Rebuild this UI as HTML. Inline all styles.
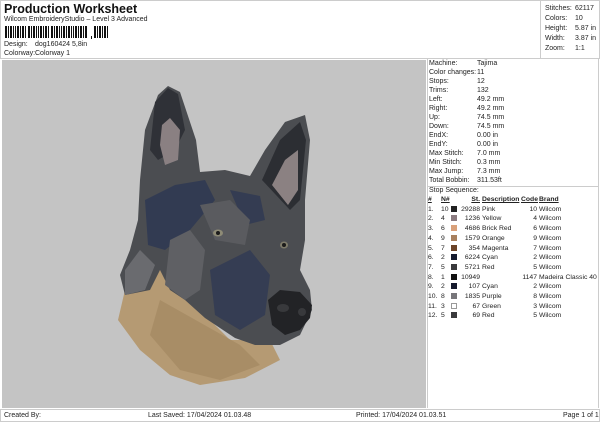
<!DOCTYPE html>
<html><head><meta charset="utf-8"><style>
*{margin:0;padding:0;box-sizing:border-box}
body{width:600px;height:424px;background:#fff;font-family:"Liberation Sans",Arial,sans-serif;color:#222;position:relative;overflow:hidden;font-size:7px}
.a{position:absolute;white-space:nowrap}
.t{font-size:12.5px;font-weight:bold;color:#111}
.s{font-size:7px}
.r{font-size:7px}
.tb{table-layout:fixed;border-collapse:collapse}
.tb td{font-size:6.8px;line-height:9.7px;height:9.7px;padding:0;white-space:nowrap;overflow:visible}
.tb td.st,.tb td.cd{text-align:right}
.tb td.ds,.tb td.br{padding-left:2px}
.tb i{display:inline-block;width:6px;height:6px;vertical-align:-1px}
</style></head><body>
<div class="a" style="left:0;top:0;width:600px;height:59px;border:1px solid #ccc;"></div>
<div class="a" style="left:540px;top:0;width:1px;height:59px;background:#ccc"></div>
<div class="a t" style="left:4px;top:2px">Production Worksheet</div>
<div class="a s" style="left:4px;top:16px">Wilcom EmbroideryStudio – Level 3 Advanced</div>
<svg class="a" style="left:5px;top:26px" width="104" height="13">
<g fill="#111">
<rect x="0" y="0" width="2" height="12"/><rect x="3" y="0" width="1" height="12"/><rect x="5" y="0" width="2" height="12"/><rect x="8" y="0" width="1" height="12"/><rect x="10" y="0" width="1" height="12"/><rect x="12" y="0" width="2" height="12"/><rect x="15" y="0" width="1" height="12"/><rect x="17" y="0" width="2" height="12"/><rect x="20" y="0" width="1" height="12"/><rect x="23" y="0" width="2" height="12"/><rect x="26" y="0" width="1" height="12"/><rect x="28" y="0" width="2" height="12"/><rect x="31" y="0" width="1" height="12"/><rect x="33" y="0" width="1" height="12"/><rect x="35" y="0" width="2" height="12"/><rect x="38" y="0" width="1" height="12"/><rect x="40" y="0" width="2" height="12"/><rect x="43" y="0" width="1" height="12"/><rect x="46" y="0" width="2" height="12"/><rect x="49" y="0" width="1" height="12"/><rect x="51" y="0" width="2" height="12"/><rect x="54" y="0" width="1" height="12"/><rect x="56" y="0" width="1" height="12"/><rect x="58" y="0" width="2" height="12"/><rect x="61" y="0" width="1" height="12"/><rect x="63" y="0" width="2" height="12"/><rect x="66" y="0" width="1" height="12"/><rect x="68" y="0" width="1" height="12"/><rect x="70" y="0" width="2" height="12"/><rect x="73" y="0" width="1" height="12"/><rect x="75" y="0" width="2" height="12"/><rect x="78" y="0" width="1" height="12"/><rect x="80" y="0" width="2" height="12"/>
<rect x="86" y="10" width="1" height="3"/>
<rect x="89" y="0" width="2" height="12"/><rect x="92" y="0" width="1" height="12"/><rect x="94" y="0" width="2" height="12"/><rect x="97" y="0" width="1" height="12"/><rect x="99" y="0" width="2" height="12"/><rect x="102" y="0" width="1" height="12"/>
</g></svg>
<div class="a s" style="left:4px;top:41px">Design:</div><div class="a s" style="left:35px;top:41px">dog160424 5,8in</div>
<div class="a s" style="left:4px;top:50px">Colorway:</div><div class="a s" style="left:35px;top:50px">Colorway 1</div>
<div class="a r" style="left:545px;top:4px;line-height:10px">Stitches:<br>Colors:<br>Height:<br>Width:<br>Zoom:</div>
<div class="a r" style="left:575px;top:4px;line-height:10px">62117<br>10<br>5.87 in<br>3.87 in<br>1:1</div>

<div class="a" style="left:2px;top:60px;width:424px;height:348px;background:#c4c4c4"></div>
<div class="a" style="left:427px;top:58px;width:172px;height:350px;border-left:1px solid #ccc;border-right:1px solid #ccc"></div>
<svg class="a" style="left:2px;top:60px" width="424" height="348" viewBox="2 60 424 348">
<path d="M125,290 L118,320 L140,350 L170,375 L200,385 L245,378 L280,360 L270,340 L230,340 L190,300 L160,270 Z" fill="#b59a73"/>
<path d="M160,300 L150,335 L180,370 L220,380 L260,365 L240,345 Z" fill="#a88d66"/>
<path d="M140,180 L145,130 L158,95 L168,86 L180,92 L196,140 L200,172 L225,170 L250,176 L265,150 L285,122 L305,115 L310,140 L305,200 L305,240 L300,270 L310,290 L312,310 L300,335 L280,345 L255,345 L235,338 L205,318 L185,300 L170,290 L160,270 L150,290 L125,295 L120,275 L130,250 L138,220 Z" fill="#4b4d51"/>
<path d="M155,102 L168,88 L178,94 L185,130 L175,150 L158,160 L150,150 Z" fill="#2f3137"/>
<path d="M160,145 L162,125 L170,118 L180,130 L178,160 L165,165 Z" fill="#8a8082"/>
<path d="M262,180 L280,140 L300,122 L306,140 L300,200 L290,210 Z" fill="#2c2e33"/>
<path d="M272,185 L285,160 L298,150 L298,190 L288,205 Z" fill="#8b8182"/>
<path d="M145,200 L175,185 L205,180 L215,200 L190,230 L165,250 L148,245 Z" fill="#323b52"/>
<path d="M230,190 L260,196 L265,220 L245,225 Z" fill="#343c52"/>
<path d="M210,270 L250,250 L270,275 L265,315 L240,330 L215,315 Z" fill="#353d53"/>
<path d="M170,240 L190,230 L205,250 L200,290 L185,300 L165,285 Z" fill="#5f6064"/>
<path d="M200,205 L230,200 L250,220 L245,245 L215,240 Z" fill="#5a5b5f"/>
<path d="M125,270 L140,250 L155,265 L145,290 L125,295 Z" fill="#6a6b6f"/>
<ellipse cx="218" cy="233" rx="5" ry="3.5" fill="#8e8b76"/><circle cx="218" cy="233" r="2" fill="#1b1b1b"/>
<ellipse cx="284" cy="245" rx="4" ry="3.5" fill="#7e7b6a"/><circle cx="284" cy="245" r="2" fill="#1b1b1b"/>
<path d="M268,300 L280,290 L300,292 L312,305 L310,318 L300,330 L285,335 L272,325 Z" fill="#222326"/>
<ellipse cx="283" cy="308" rx="6" ry="4" fill="#38393c"/><ellipse cx="302" cy="312" rx="4" ry="4" fill="#38393c"/>
</svg>

<div class="a r" style="left:429px;top:59px;line-height:9px">Machine:<br>Color changes:<br>Stops:<br>Trims:<br>Left:<br>Right:<br>Up:<br>Down:<br>EndX:<br>EndY:<br>Max Stitch:<br>Min Stitch:<br>Max Jump:<br>Total Bobbin:</div>
<div class="a r" style="left:477px;top:59px;line-height:9px">Tajima<br>11<br>12<br>132<br>49.2 mm<br>49.2 mm<br>74.5 mm<br>74.5 mm<br>0.00 in<br>0.00 in<br>7.0 mm<br>0.3 mm<br>7.3 mm<br>311.53ft</div>
<div class="a" style="left:428px;top:186px;width:171px;height:1px;background:#ccc"></div>
<div class="a r" style="left:429px;top:187px">Stop Sequence:</div>
<table class="a tb" style="left:428px;top:195px;width:170px">
<colgroup><col style="width:13px"><col style="width:10px"><col style="width:7px"><col style="width:22px"><col style="width:41px"><col style="width:16px"><col style="width:61px"></colgroup>
<tr style="font-weight:bold;text-decoration:underline"><td>#</td><td>N#</td><td></td><td class="st">St.</td><td class="ds">Description</td><td class="cd">Code</td><td class="br">Brand</td></tr>
<tr><td>1.</td><td>10</td><td><i style="background:#222"></i></td><td class="st">29288</td><td class="ds">Pink</td><td class="cd">10</td><td class="br">Wilcom</td></tr>
<tr><td>2.</td><td>4</td><td><i style="background:#8b7b80"></i></td><td class="st">1236</td><td class="ds">Yellow</td><td class="cd">4</td><td class="br">Wilcom</td></tr>
<tr><td>3.</td><td>6</td><td><i style="background:#d9a07a"></i></td><td class="st">4686</td><td class="ds">Brick Red</td><td class="cd">6</td><td class="br">Wilcom</td></tr>
<tr><td>4.</td><td>9</td><td><i style="background:#a8805e"></i></td><td class="st">1579</td><td class="ds">Orange</td><td class="cd">9</td><td class="br">Wilcom</td></tr>
<tr><td>5.</td><td>7</td><td><i style="background:#6b4327"></i></td><td class="st">354</td><td class="ds">Magenta</td><td class="cd">7</td><td class="br">Wilcom</td></tr>
<tr><td>6.</td><td>2</td><td><i style="background:#151a2e"></i></td><td class="st">6224</td><td class="ds">Cyan</td><td class="cd">2</td><td class="br">Wilcom</td></tr>
<tr><td>7.</td><td>5</td><td><i style="background:#3a3a3c"></i></td><td class="st">5721</td><td class="ds">Red</td><td class="cd">5</td><td class="br">Wilcom</td></tr>
<tr><td>8.</td><td>1</td><td><i style="background:#111"></i></td><td class="st">10949</td><td class="ds"></td><td class="cd">1147</td><td class="br">Madeira Classic 40</td></tr>
<tr><td>9.</td><td>2</td><td><i style="background:#151a2e"></i></td><td class="st">107</td><td class="ds">Cyan</td><td class="cd">2</td><td class="br">Wilcom</td></tr>
<tr><td>10.</td><td>8</td><td><i style="background:#77767a"></i></td><td class="st">1835</td><td class="ds">Purple</td><td class="cd">8</td><td class="br">Wilcom</td></tr>
<tr><td>11.</td><td>3</td><td><i style="background:#fff;border:1px solid #999"></i></td><td class="st">67</td><td class="ds">Green</td><td class="cd">3</td><td class="br">Wilcom</td></tr>
<tr><td>12.</td><td>5</td><td><i style="background:#3a3a3c"></i></td><td class="st">69</td><td class="ds">Red</td><td class="cd">5</td><td class="br">Wilcom</td></tr>
</table>

<div class="a" style="left:0;top:409px;width:600px;height:13px;border:1px solid #ccc"></div>
<div class="a r" style="left:4px;top:412px">Created By:</div>
<div class="a r" style="left:148px;top:412px">Last Saved: 17/04/2024 01.03.48</div>
<div class="a r" style="left:356px;top:412px">Printed: 17/04/2024 01.03.51</div>
<div class="a r" style="left:563px;top:412px">Page 1 of 1</div>
</body></html>
